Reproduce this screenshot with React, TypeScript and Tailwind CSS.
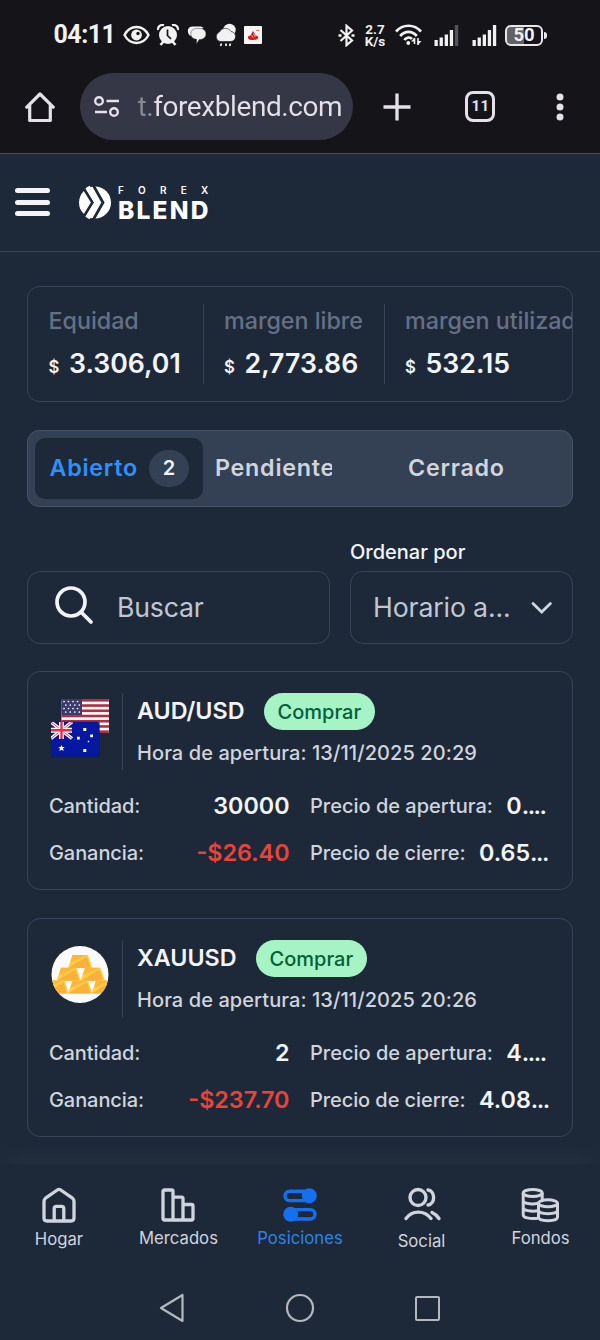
import type { ReactNode } from "react";

type Position = {
  symbol: string;
  openedAt: string;
  amount: string;
  profit: string;
  openPrice: string;
  closePrice: string;
  icon: ReactNode;
};

function StatusBar() {
  return (
    <div className="flex h-[70px] items-center pl-[53.500px] text-[#f1f1f1]">
      <span className="w-[62.500px] whitespace-nowrap font-[Roboto] text-[25px] leading-6 font-bold tracking-[-0.500px]">04:11</span>

      <svg className="ml-[7px]" width="27" height="20" viewBox="0 0 27 20" fill="none">
        <path d="M1.500 10C7-.6 20-.6 25.500 10 20 20.600 7 20.600 1.500 10Z" stroke="currentColor" strokeWidth="2.400" />
        <circle cx="13.500" cy="10" r="5.400" fill="currentColor" />
        <circle cx="15" cy="8.500" r="1.700" fill="#151419" />
      </svg>
      <svg className="ml-[7px]" width="22" height="22" viewBox="0 0 22 22" fill="none">
        <path d="M3.500 21l3-3.500M18.500 21l-3-3.500" stroke="currentColor" strokeWidth="2.500" />
        <path d="M1 6A4.500 4.500 0 017 1.200M21 6A4.500 4.500 0 0015 1.200" stroke="currentColor" strokeWidth="2.200" />
        <circle cx="11" cy="11" r="9" fill="currentColor" />
        <path d="M10.500 5.500v6l3.500 3.500" stroke="#151419" strokeWidth="1.700" />
      </svg>
      <svg className="ml-2" width="20" height="20" viewBox="0 0 20 20">
        <path d="M3.500 11C-.5 8 0 2 5 1.500h7c2 0 3.500.3 4.500 1.500L8 7Z" fill="currentColor" />
        <path
          d="M9.500 3.500H13c4 0 6 2.500 6 5.500s-2.500 5.500-6 5.500h-.7L9.500 19v-4.700C6 14 3.800 12 3.800 9s2-5.500 5.700-5.500Z"
          fill="currentColor"
          stroke="#151419"
          strokeWidth=".4"
        />
      </svg>
      <svg className="ml-2" width="22" height="24" viewBox="0 0 22 24">
        <circle cx="14.500" cy="7" r="6.200" fill="currentColor" />
        <path d="M5 18.500a5 5 0 01-.5-9.500 6.500 6.500 0 0111.500-.5c6 .5 6 9.500 0 10Z" fill="currentColor" stroke="#151419" strokeWidth=".6" />
        <path d="M6.500 20.500l-1 2.500M11 20.500v2.500M15.500 20.500l-1 2.500" stroke="currentColor" strokeWidth="1.800" />
      </svg>
      <svg className="ml-[7px]" width="18" height="18" viewBox="0 0 18 18">
        <rect width="18" height="18" rx=".8" fill="#f6f5f5" />
        <path d="M9 4.500c0 2 2.500 3 2.200 5 2 .3 3 1 3 1.900 0 1.600-2.300 2.600-5.200 2.600s-5.200-1-5.200-2.600c0-1 1-1.700 2.700-2C6.700 8 8.500 6.800 9 4.500Z" fill="#d71920" />
        <path d="M7.200 8.500c.3 1.500 1.800 2 2 3.300M9.500 7.500c.3 1.300 1.600 2 1.500 3.500" stroke="#fff" strokeWidth=".6" fill="none" />
        <path d="M12.300 4.500h3" stroke="#e0666b" strokeWidth="1" />
      </svg>

      <svg className="ml-[76px]" width="17" height="23" viewBox="0 0 17 23" fill="none" stroke="currentColor" strokeWidth="2.200">
        <path d="M2.500 6L14 16.500 8.500 21.200V1.800L14 6.500 2.500 17" />
        <path d="M.5 11.500h3M13.500 11.500h3" strokeWidth="2.400" />
      </svg>
      <div className="ml-[8px] w-6 text-center font-[Roboto] text-[13.500px] leading-[12px] font-bold">
        <div>2.7</div>
        <div>K/s</div>
      </div>
      <svg className="ml-2" width="28" height="22" viewBox="0 0 28 22" fill="none" stroke="currentColor" strokeWidth="2.700">
        <path d="M1 7.500C8-.2 19-.2 26 7.500M5.200 12C10 6.500 17 6.500 21.800 12M9.300 16C11.500 13 15 12.800 17 15" />
        <circle cx="13.300" cy="19" r="1.900" fill="currentColor" stroke="none" />
        <path d="M19.500 20v-6M23 14v7" strokeWidth="1.600" />
        <path d="M16 17.500L19.700 13.500v4ZM22.500 17H26.500L23 21Z" fill="currentColor" stroke="none" />
      </svg>
      <svg className="ml-[11px]" width="25" height="22" viewBox="0 0 25 22" fill="currentColor">
        <path d="M.5 16h3.300v6H.5ZM5.600 13.500h3.300V22H5.600ZM10.700 10.500H14V22h-3.300ZM15.800 6h3.300v16h-3.300Z" />
        <path d="M20.900 1h3.300v21h-3.300Z" fill="#55545a" />
      </svg>
      <svg className="ml-[13px]" width="25" height="22" viewBox="0 0 25 22" fill="currentColor">
        <path d="M.5 16h3.300v6H.5ZM5.600 13.500h3.300V22H5.600ZM10.700 10.500H14V22h-3.300ZM15.800 6h3.300v16h-3.300ZM20.900 1h3.300v21h-3.300Z" />
      </svg>
      <div className="ml-[8px] flex h-[21px] w-[38px] items-center justify-center rounded-[6px] border-2 border-[#e8e8e8] bg-linear-to-r from-[#626166] from-50% to-[#151419] to-50% font-[Roboto] text-[18.500px] leading-none font-bold">
        50
      </div>
      <div className="ml-px h-[7px] w-[3px] rounded-r bg-[#e8e8e8]" />
    </div>
  );
}

function BrowserBar() {
  return (
    <div className="flex h-[83px] items-start pt-[3px] pl-[25px] text-[#e5e0e9]">
      <svg className="mt-[18px]" width="30" height="32" viewBox="0 0 30 32" fill="none" stroke="currentColor" strokeWidth="3.200" strokeLinejoin="round">
        <path d="M4.700 14V29.500h20.600V14M1.800 16.200L15 3 28.200 16.200" strokeLinecap="round" />
      </svg>
      <div className="ml-[25px] flex h-[67px] w-[273px] items-center rounded-full bg-[#363746] pl-[14px]">
        <svg width="26" height="22" viewBox="0 0 26 22" fill="none" stroke="currentColor" strokeWidth="2.400">
          <circle cx="5" cy="5" r="3.800" />
          <circle cx="20" cy="16" r="3.800" />
          <path d="M12.500 5H25M1 16h12" />
        </svg>
        <span className="ml-[17.500px] w-[210px] bg-linear-to-r from-[#8a8995] from-5% to-[#e5e0e9] to-9% bg-clip-text font-[Roboto] text-[28px] leading-[40px] tracking-[-0.420px] text-transparent">
          t.forexblend.com
        </span>
      </div>
      <svg className="mt-5 ml-[30px]" width="28" height="28" viewBox="0 0 28 28" fill="none" stroke="currentColor" strokeWidth="3.300">
        <path d="M14 .5v27M.5 14h27" />
      </svg>
      <div className="mt-[18px] ml-[54px] flex h-[31px] w-[30px] items-center justify-center rounded-[8px] border-3 border-[#e5e0e9] pl-px font-[Roboto] text-[15px] font-bold tracking-[0.500px]">
        11
      </div>
      <svg className="mt-5 ml-[61px]" width="8" height="28" viewBox="0 0 8 28" fill="currentColor">
        <circle cx="4" cy="4" r="3.500" />
        <circle cx="4" cy="14" r="3.500" />
        <circle cx="4" cy="24" r="3.500" />
      </svg>
    </div>
  );
}

function Header() {
  return (
    <header className="flex h-[99px] items-start border-t border-b border-t-[#484b51] border-b-[#3a4557] pt-[31px] pl-[15px]">
      <button className="mt-[3px] flex flex-col gap-[6.500px]">
        <span className="h-[5px] w-[35px] rounded-full bg-[#f2f4f7]" />
        <span className="h-[5px] w-[35px] rounded-full bg-[#f2f4f7]" />
        <span className="h-[5px] w-[35px] rounded-full bg-[#f2f4f7]" />
      </button>
      <svg className="mt-px ml-[29px]" width="33" height="33" viewBox="0 0 33 33">
        <circle cx="16" cy="16.500" r="16" fill="#fff" />
        <path d="M4 1L13.500 16.500 4 32M13.500-2L24 16.500 13.500 35" fill="none" stroke="#1d2939" strokeWidth="2.800" />
        <path d="M8.500 1L18 16.500 8.500 32" fill="none" stroke="#fff" strokeWidth="5" />
      </svg>
      <div className="ml-[6px] text-white">
        <div className="text-[10px] leading-[10px] font-semibold tracking-[14.200px]">FOREX</div>
        <div className="mt-[2.500px] text-[24.500px] leading-[24px] font-extrabold tracking-[2.200px]">BLEND</div>
      </div>
    </header>
  );
}

function Stat({ label, value, className }: { label: string; value: string; className: string }) {
  return (
    <div className={`h-20 shrink-0 whitespace-nowrap ${className}`}>
      <div className="text-[23.300px] leading-[33px] font-medium tracking-[-0.020px] text-[#667085]">{label}</div>
      <div className="mt-[6px] flex items-baseline text-[#f2f4f7]">
        <span className="w-[20.500px] text-[16.700px] font-semibold">$</span>
        <span className="text-[26.700px] leading-[41px] font-semibold">{value}</span>
      </div>
    </div>
  );
}

function Tabs() {
  return (
    <div className="mt-[27.500px] flex h-[77px] items-center rounded-[12px] border border-[#475467] bg-[#344054] pl-[7px] text-[23.300px] font-semibold tracking-[0.740px] text-[#d0d5dd]">
      <div className="flex h-[61px] w-[168px] items-center rounded-[10px] bg-[#1d2939] pl-[14.500px] text-[#2e90fa]">
        <span className="w-[99.500px]">Abierto</span>
        <span className="flex h-[37px] w-[40px] items-center justify-center rounded-full bg-[#344054] text-[20px] tracking-normal text-[#f2f4f7]">2</span>
      </div>
      <div className="ml-[12px] w-[117px] overflow-hidden">Pendiente</div>
      <div className="ml-[76px]">Cerrado</div>
    </div>
  );
}

function Filters() {
  return (
    <div className="mt-[30.500px] flex items-end justify-between">
      <div className="flex h-[73px] w-[303px] items-center rounded-[13px] border border-[#374458] pl-[26px] text-[26.700px] text-[#c0c7d3]">
        <svg className="-mt-1" width="42" height="42" viewBox="0 0 42 42" fill="none" stroke="#f2f4f7" strokeWidth="3.700" strokeLinecap="round">
          <circle cx="17" cy="17" r="14" />
          <path d="M27 27l10 10" />
        </svg>
        <span className="ml-[21px] tracking-[-0.200px]">Buscar</span>
      </div>
      <div>
        <div className="pb-[3px] text-[20px] leading-[31px] font-medium text-[#f2f4f7]">Ordenar por</div>
        <div className="flex h-[73px] w-[223px] items-center rounded-[13px] border border-[#374458] pl-[22px] text-[26.700px] text-[#c0c7d3]">
          <span className="w-[158px] whitespace-nowrap tracking-[-0.150px]">Horario a...</span>
          <svg width="22" height="14" viewBox="0 0 22 14" fill="none" stroke="#d0d5dd" strokeWidth="2.800" strokeLinecap="round">
            <path d="M2 2.500l8.700 8.500L19.400 2.500" />
          </svg>
        </div>
      </div>
    </div>
  );
}

function FlagPair() {
  return (
    <svg width="60" height="61" viewBox="0 0 60 61">
      <defs>
        <clipPath id="us"><rect x="11.500" y="2" width="47.500" height="34" rx="2" /></clipPath>
        <clipPath id="au"><rect x="1" y="25" width="48" height="34.500" rx="2" /></clipPath>
      </defs>
      <g clipPath="url(#us)">
        <rect x="11" y="2" width="49" height="34" fill="#fff" />
        {[0, 1, 2, 3, 4, 5, 6].map((i) => (
          <rect key={i} x="11" y={2 + i * 5.230} width="49" height="2.620" fill="#b22f43" />
        ))}
        <rect x="11" y="2" width="21" height="16" fill="#3c3b6e" />
        {[4, 7.500, 11, 14.500].map((y, row) =>
          [14, 18.500, 23, 27.500].map((x) => (
            <circle key={`${x}-${y}`} cx={x + (row % 2) * 1.800} cy={y + 0.500} r=".85" fill="#fff" />
          )),
        )}
      </g>
      <rect x="1" y="24.500" width="49" height="36" rx="2" fill="#111c38" opacity=".6" />
      <g clipPath="url(#au)">
        <rect x="1" y="25" width="48" height="35" fill="#0718a0" />
        <path d="M1 25l21 16.500M22 25L1 41.500" stroke="#fff" strokeWidth="3.400" />
        <path d="M1 25l21 16.500M22 25L1 41.500" stroke="#e5364b" strokeWidth="1" />
        <path d="M11.500 25v17M1 33.300h21" stroke="#fff" strokeWidth="5" />
        <path d="M11.500 25v17M1 33.300h21" stroke="#ef2b44" strokeWidth="2.400" />
        <path d="M11.500 48l.9 2h2.300l-1.700 1.600.7 2.400-2.200-1.300-2.200 1.300.7-2.400-1.700-1.600h2.300Z" fill="#fff" />
        <path d="M33.300 31h3v3h-3ZM27 39.800h2.800v2.800H27ZM40.200 37.500H43v2.800h-2.800ZM33.300 52h3v3h-3ZM37.800 43.800h1.400v1.400h-1.400Z" fill="#fff" />
      </g>
    </svg>
  );
}

// One bar: yellow body with an amber facet rising to the right
function Ingot({ x, y }: { x: number; y: number }) {
  return (
    <g transform={`translate(${x} ${y})`}>
      <path d="M4 0h15.500L24 13H-.5Z" fill="#ffcf45" />
      <path d="M4 0h15L2 7.500Z" fill="#fdb53a" />
      <path d="M-.5 13L18.500 1.500 22 13Z" fill="#fbb03b" />
    </g>
  );
}

function GoldIcon() {
  return (
    <svg width="60" height="61" viewBox="0 0 60 61">
      <defs>
        <clipPath id="gold"><circle cx="30" cy="30.500" r="28.500" /></clipPath>
      </defs>
      <circle cx="30" cy="30.500" r="28.500" fill="#f9fafb" />
      <g clipPath="url(#gold)">
        <Ingot x={18.500} y={11} />
        <Ingot x={7} y={23.800} />
        <Ingot x={31} y={23.800} />
        <Ingot x={-5} y={36.500} />
        <Ingot x={18.500} y={36.500} />
        <Ingot x={42} y={36.500} />
      </g>
    </svg>
  );
}

const positions: Position[] = [
  {
    symbol: "AUD/USD",
    openedAt: "13/11/2025 20:29",
    amount: "30000",
    profit: "-$26.40",
    openPrice: "0....",
    closePrice: "0.65...",
    icon: <FlagPair />,
  },
  {
    symbol: "XAUUSD",
    openedAt: "13/11/2025 20:26",
    amount: "2",
    profit: "-$237.70",
    openPrice: "4....",
    closePrice: "4.08...",
    icon: <GoldIcon />,
  },
];

// The trailing dots sit closer together than the digits
function Price({ value }: { value: string }) {
  const digits = value.replace(/\.+$/, "");
  return (
    <span className="-mt-px ml-[13.500px] text-[23.300px] font-semibold text-[#f2f4f7]">
      {digits}
      <span className="tracking-[-1.500px]">{value.slice(digits.length)}</span>
    </span>
  );
}

function PositionCard({ position }: { position: Position }) {
  return (
    <article className="h-[219px] rounded-[13px] border border-[#374458] pt-[21px] pl-[21px] text-[20px] font-medium whitespace-nowrap text-[#d0d5dd]">
      <div className="flex h-[77px]">
        <div className="mt-[4px] ml-px w-[72px]">{position.icon}</div>
        <div className="w-px bg-[#374458]" />
        <div className="ml-[14px]">
          <div className="flex h-[37px] items-center">
            <span className="text-[23.300px] font-semibold text-[#f2f4f7]">{position.symbol}</span>
            <span className="ml-[19.500px] flex h-[37px] items-center rounded-full bg-[#a6f4c5] px-[13.500px] text-[#05603a]">Comprar</span>
          </div>
          <div className="mt-[8px] leading-[30px] tracking-[0.080px]">Hora de apertura: {position.openedAt}</div>
        </div>
      </div>
      <div className="mt-[13px] flex leading-[47px]">
        <div className="w-[240.500px]">
          <div className="flex h-[47px] justify-between">
            <span className="tracking-[-0.080px]">Cantidad:</span>
            <span className="-mt-px text-[23.300px] font-semibold text-[#f2f4f7]">{position.amount}</span>
          </div>
          <div className="flex h-[47px] justify-between">
            <span className="tracking-[-0.080px]">Ganancia:</span>
            <span className="-mt-px text-[23.300px] font-semibold text-[#e8443a]">{position.profit}</span>
          </div>
        </div>
        <div className="ml-[20.500px]">
          <div className="flex h-[47px]">
            <span>Precio de apertura:</span>
            <Price value={position.openPrice} />
          </div>
          <div className="flex h-[47px]">
            <span className="tracking-[-0.080px]">Precio de cierre:</span>
            <Price value={position.closePrice} />
          </div>
        </div>
      </div>
    </article>
  );
}

function BottomNav() {
  return (
    <nav className="flex h-[103px] bg-[#1d2939] pt-[22px] text-[16.700px] leading-6 text-[#d0d5dd] shadow-[0_-10px_24px_rgba(255,255,255,0.03)]">
      <div className="flex w-[118px] flex-col items-center">
        <svg width="40" height="40" viewBox="0 0 40 40" fill="none" stroke="currentColor" strokeWidth="3.300" strokeLinejoin="round">
          <path d="M5 15.200c0-1.200.5-2.200 1.500-3L18.300 4c1.100-.8 2.300-.8 3.400 0l11.800 8.200c1 .8 1.500 1.800 1.500 3V32c0 2-1 3-3 3H8c-2 0-3-1-3-3Z" />
          <path d="M15.200 35V22.500c0-1.500.7-2.200 2.200-2.200h5.200c1.500 0 2.200.7 2.200 2.200V35" />
        </svg>
        <span className="mt-[1px]">Hogar</span>
      </div>
      <div className="flex w-[121px] flex-col items-center">
        <svg className="mr-[2px]" width="40" height="40" viewBox="0 0 40 40" fill="none" stroke="currentColor" strokeWidth="3.300" strokeLinejoin="round">
          <path d="M15 34H6.500c-1 0-1.500-.5-1.500-1.500v-27C5 4.500 5.500 4 6.500 4h7c1 0 1.500.5 1.500 1.500V34h10V12.700c0-1-.5-1.500-1.500-1.500H15M25 34h8.500c1 0 1.500-.5 1.500-1.500V20c0-1-.5-1.500-1.500-1.500H25" />
        </svg>
        <span>Mercados</span>
      </div>
      <div className="flex w-[122px] flex-col items-center text-[#2e84e6]">
        <svg width="40" height="40" viewBox="0 0 40 40" fill="none" stroke="#1570ef" strokeWidth="3.400">
          <rect x="5" y="5.200" width="28" height="9.400" rx="4.700" />
          <rect x="7" y="23.600" width="28" height="9.400" rx="4.700" />
          <circle cx="29.300" cy="9.700" r="7.500" fill="#1570ef" stroke="none" />
          <circle cx="10.700" cy="28.300" r="7.500" fill="#1570ef" stroke="none" />
        </svg>
        <span>Posiciones</span>
      </div>
      <div className="flex w-[121px] flex-col items-center">
        <svg width="40" height="40" viewBox="0 0 40 40" fill="none" stroke="currentColor" strokeWidth="3.400" strokeLinecap="round">
          <circle cx="16" cy="11.500" r="8" />
          <path d="M26 4c7.500 1 7.500 14 0 15M4 32.500c6-8.500 18.500-8.500 25 0M30 26.500c3 1.300 5 3 7 6" />
        </svg>
        <span className="mt-[3px]">Social</span>
      </div>
      <div className="flex w-[117px] flex-col items-center">
        <svg className="mr-px" width="40" height="40" viewBox="0 0 40 40" fill="none" stroke="currentColor" strokeWidth="3">
          <ellipse cx="12.700" cy="7" rx="9.500" ry="3.500" />
          <path d="M3.200 7v22c0 2.500 6 4.200 15 3.200M22.200 7v8M3.200 14.200c0 4 12 4.700 16.500 2.500M3.200 21.500c0 3 7.500 4.300 15 3.300" />
          <ellipse cx="28" cy="17.300" rx="9.500" ry="3.500" />
          <path d="M18.500 17.300v14c0 4.500 19 4.500 19 0v-14M18.500 24.300c0 4.500 19 4.500 19 0" />
        </svg>
        <span>Fondos</span>
      </div>
    </nav>
  );
}

export default function App() {
  return (
    <div className="h-[1340px] w-[600px] overflow-hidden bg-[#1d2939] font-[Inter,sans-serif]">
      <div className="bg-[#151419]">
        <StatusBar />
        <BrowserBar />
      </div>
      <Header />
      <main className="h-[912px] px-[27px] pt-[34px]">
        <section className="flex h-[116px] overflow-hidden rounded-[12px] border border-[#374458] pt-[17px] pl-[20.500px]">
          <Stat label="Equidad" value="3.306,01" className="w-[155px] border-r border-[#374458]" />
          <Stat label="margen libre" value="2,773.86" className="w-[181px] border-r border-[#374458] pl-[20.500px]" />
          <Stat label="margen utilizado" value="532.15" className="pl-[20.500px]" />
        </section>
        <Tabs />
        <Filters />
        <section className="mt-[27px] flex flex-col gap-7">
          {positions.map((position) => (
            <PositionCard key={position.symbol} position={position} />
          ))}
        </section>
      </main>
      <BottomNav />
      <div className="flex h-[73px] items-center pt-[9px] pl-[158px] text-[#b5b8bc]">
        <svg width="28" height="32" viewBox="0 0 28 32" fill="none" stroke="currentColor" strokeWidth="2.200" strokeLinejoin="round">
          <path d="M24.500 3v26L3 16Z" />
        </svg>
        <svg className="ml-[99px]" width="30" height="30" viewBox="0 0 30 30" fill="none" stroke="currentColor" strokeWidth="2.200">
          <circle cx="15" cy="15" r="13" />
        </svg>
        <div className="ml-[100px] size-[25px] rounded-[2px] border-2 border-[#b5b8bc]" />
      </div>
    </div>
  );
}
